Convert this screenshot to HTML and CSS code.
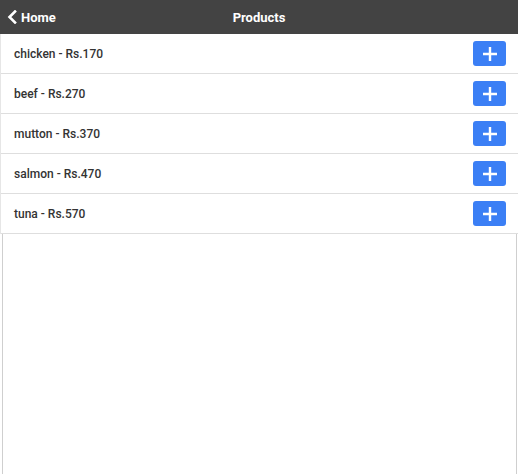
FILE: index.html
```html
<!DOCTYPE html>
<html>
<head>
<meta charset="utf-8">
<link rel="stylesheet" href="styles.css">
</head>
<body>
<header class="bar">
  <a class="back">
    <svg width="10" height="14" viewBox="0 0 10 14"><path d="M8 1.5 L2.5 7 L8 12.5" fill="none" stroke="#fff" stroke-width="2.6" stroke-linecap="square"/></svg>
    <span>Home</span>
  </a>
  <h1 class="title">Products</h1>
</header>
<ul class="list">
  <li class="item"><span class="name">chicken - Rs.170</span><button class="add"><svg width="14" height="14" viewBox="0 0 14 14"><path d="M7 0v14M0 7h14" stroke="#fff" stroke-width="2.4"/></svg></button></li>
  <li class="item"><span class="name">beef - Rs.270</span><button class="add"><svg width="14" height="14" viewBox="0 0 14 14"><path d="M7 0v14M0 7h14" stroke="#fff" stroke-width="2.4"/></svg></button></li>
  <li class="item"><span class="name">mutton - Rs.370</span><button class="add"><svg width="14" height="14" viewBox="0 0 14 14"><path d="M7 0v14M0 7h14" stroke="#fff" stroke-width="2.4"/></svg></button></li>
  <li class="item"><span class="name">salmon - Rs.470</span><button class="add"><svg width="14" height="14" viewBox="0 0 14 14"><path d="M7 0v14M0 7h14" stroke="#fff" stroke-width="2.4"/></svg></button></li>
  <li class="item"><span class="name">tuna - Rs.570</span><button class="add"><svg width="14" height="14" viewBox="0 0 14 14"><path d="M7 0v14M0 7h14" stroke="#fff" stroke-width="2.4"/></svg></button></li>
</ul>
<div class="empty"></div>
</body>
</html>
```
FILE: styles.css
```css
html, body {
  margin: 0;
  padding: 0;
  height: 100%;
  background: #fff;
  font-family: Roboto, "Liberation Sans", sans-serif;
}
body {
  display: flex;
  flex-direction: column;
  overflow: hidden;
}
.bar {
  position: relative;
  height: 34px;
  background: #434343;
  display: flex;
  align-items: center;
  justify-content: center;
  flex-shrink: 0;
}
.back {
  position: absolute;
  left: 7px;
  top: 0;
  height: 34px;
  display: flex;
  align-items: center;
  gap: 4px;
  color: #fff;
  font-weight: 700;
  font-size: 13px;
}
.title {
  margin: 0;
  color: #fff;
  font-size: 13px;
  font-weight: 700;
}
.list {
  list-style: none;
  margin: 0;
  padding: 0;
  border-left: 1px solid #e6e6e6;
  flex-shrink: 0;
}
.item {
  height: 39px;
  border-bottom: 1px solid #dedede;
  display: flex;
  align-items: center;
  justify-content: space-between;
  padding: 0 12px 0 13px;
}
.name {
  font-size: 12px;
  font-weight: 500;
  color: #333;
}
.add {
  width: 33px;
  height: 25px;
  border: none;
  border-radius: 3px;
  background: #3b7ff5;
  display: flex;
  align-items: center;
  justify-content: center;
  padding: 0;
}
.empty {
  flex: 1;
  margin: 0 1px 0 2px;
  border-left: 1px solid #cfcfcf;
  border-right: 1px solid #cfcfcf;
}
```
